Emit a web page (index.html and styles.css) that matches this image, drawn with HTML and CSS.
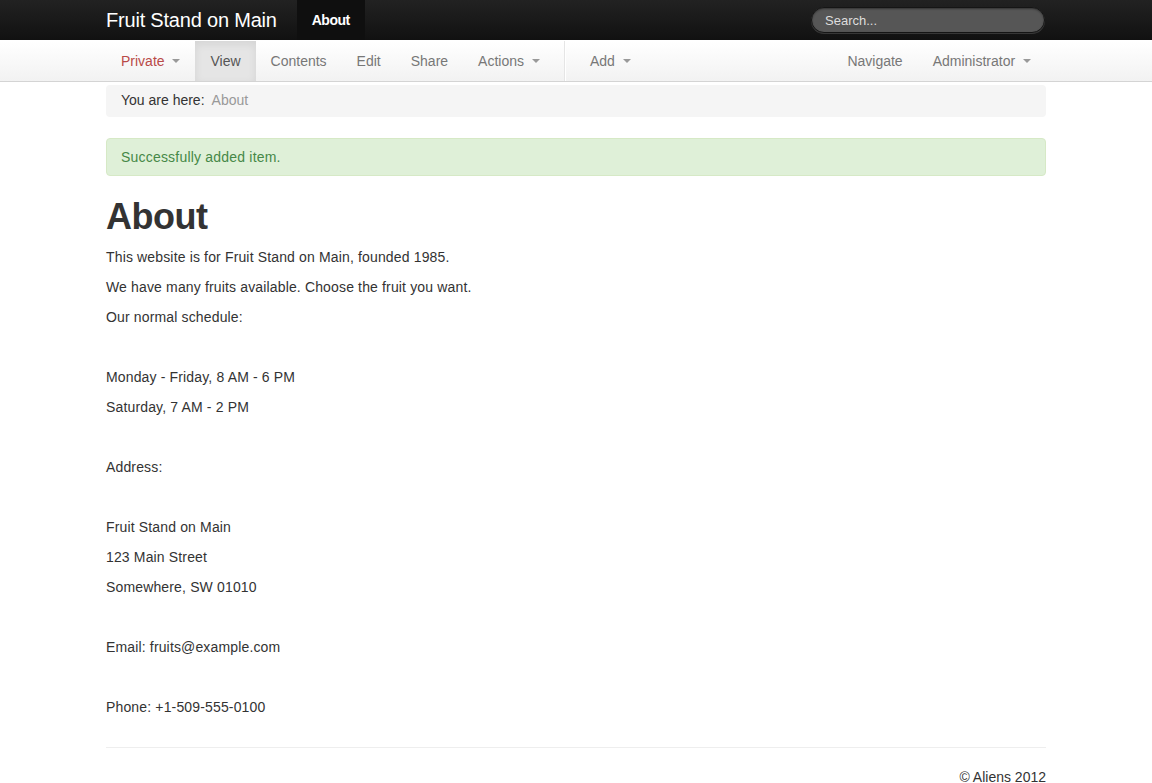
FILE: index.html
```html
<!DOCTYPE html>
<html>
<head>
<meta charset="utf-8">
<link rel="stylesheet" href="styles.css">
<title>About</title>
</head>
<body>
<div class="topbar">
  <div class="container topbar-inner">
    <a class="brand" href="#">Fruit Stand on Main</a>
    <ul class="topnav">
      <li class="active"><a href="#">About</a></li>
    </ul>
    <div class="search">
      <input type="text" class="search-input" placeholder="Search...">
    </div>
  </div>
</div>
<div class="toolbar">
  <div class="container toolbar-inner">
    <ul class="tnav">
      <li><a href="#" class="private">Private <span class="caret"></span></a></li>
      <li class="active"><a href="#">View</a></li>
      <li><a href="#">Contents</a></li>
      <li><a href="#">Edit</a></li>
      <li><a href="#">Share</a></li>
      <li><a href="#">Actions <span class="caret"></span></a></li>
      <li class="divider"></li>
      <li><a href="#">Add <span class="caret"></span></a></li>
    </ul>
    <ul class="tnav">
      <li><a href="#">Navigate</a></li>
      <li><a href="#">Administrator <span class="caret"></span></a></li>
    </ul>
  </div>
</div>
<div class="container main">
  <div class="breadcrumb">You are here:&nbsp; <span class="crumb">About</span></div>
  <div class="alert">Successfully added item.</div>
  <h1 class="title">About</h1>
  <div class="content">
    <p>This website is for Fruit Stand on Main, founded 1985.</p>
    <p>We have many fruits available. Choose the fruit you want.</p>
    <p>Our normal schedule:</p>
    <p>&nbsp;</p>
    <p>Monday - Friday, 8 AM - 6 PM</p>
    <p>Saturday, 7 AM - 2 PM</p>
    <p>&nbsp;</p>
    <p>Address:</p>
    <p>&nbsp;</p>
    <p>Fruit Stand on Main</p>
    <p>123 Main Street</p>
    <p>Somewhere, SW 01010</p>
    <p>&nbsp;</p>
    <p>Email: fruits@example.com</p>
    <p>&nbsp;</p>
    <p>Phone: +1-509-555-0100</p>
  </div>
  <hr class="rule">
  <div class="footer">© Aliens 2012</div>
</div>
</body>
</html>
```
FILE: styles.css
```css
* { box-sizing: border-box; }
html, body { margin: 0; padding: 0; }
body {
  font-family: "Liberation Sans", Arial, sans-serif;
  font-size: 14px;
  line-height: 20px;
  color: #333;
  background: #fff;
}
a { text-decoration: none; }
.container { width: 940px; margin: 0 auto; }

.topbar {
  height: 40px;
  background: linear-gradient(to bottom, #222 0%, #111 100%);
}
.topbar-inner { display: flex; align-items: stretch; height: 40px; }
.brand {
  color: #fff;
  font-size: 20px;
  line-height: 20px;
  letter-spacing: -0.2px;
  padding: 10px 20px 10px 0;
}
.topnav, .tnav { list-style: none; margin: 0; padding: 0; display: flex; }
.topnav li a {
  display: block;
  padding: 10px 15px;
  color: #fff;
  font-weight: bold;
  font-size: 14px;
  line-height: 20px;
  letter-spacing: -0.5px;
}
.topnav li.active a { background: #0f0f0f; }
.search { margin-left: auto; padding-top: 7px; margin-right: 1px; }
.search-input {
  width: 234px;
  height: 26px;
  border-radius: 14px;
  border: 1px solid #151515;
  background: #565656;
  box-shadow: inset 0 1px 2px rgba(0,0,0,0.4), 0 1px 0 rgba(255,255,255,0.15);
  color: #eee;
  font-family: "Liberation Sans", Arial, sans-serif;
  font-size: 13px;
  padding: 3px 13px;
  outline: none;
}
.search-input::placeholder { color: #ddd; }

.toolbar {
  margin-top: 1px;
  height: 41px;
  background: linear-gradient(to bottom, #fff 0%, #f2f2f2 100%);
  border-bottom: 1px solid #d4d4d4;
}
.toolbar-inner { display: flex; justify-content: space-between; height: 40px; }
.tnav li a {
  display: block;
  padding: 10px 15px;
  color: #777;
  font-size: 14px;
  line-height: 20px;
}
.tnav li.active a {
  background: #e5e5e5;
  color: #555;
  box-shadow: inset 0 3px 8px rgba(0,0,0,0.08);
}
.tnav li a.private { color: #b94a48; }
.tnav li.divider {
  width: 2px;
  height: 40px;
  margin: 0 9px;
  border-left: 1px solid #e5e5e5;
  border-right: 1px solid #fff;
}
.caret {
  display: inline-block;
  width: 0;
  height: 0;
  vertical-align: middle;
  margin-left: 4px;
  margin-top: -2px;
  border-top: 4px solid #999;
  border-left: 4px solid transparent;
  border-right: 4px solid transparent;
}

.main { padding-top: 3px; }
.breadcrumb {
  background: #f5f5f5;
  border-radius: 4px;
  padding: 5px 15px 7px;
  margin-bottom: 21px;
  color: #333;
}
.crumb { color: #999; }
.alert {
  background: #dff0d8;
  border: 1px solid #d6e9c6;
  color: #468847;
  border-radius: 4px;
  padding: 8px 14px;
  margin-bottom: 21px;
  letter-spacing: 0.2px;
}
.title {
  font-size: 36px;
  line-height: 40px;
  margin: 10px 0;
  font-weight: bold;
  color: #333;
  letter-spacing: -0.5px;
}
.content { display: flow-root; letter-spacing: 0.15px; }
p { margin: 0 0 10px; }
.rule {
  margin: 20px 0 19px;
  border: 0;
  border-top: 1px solid #eee;
  height: 0;
}
.footer { text-align: right; line-height: 20px; }
```
